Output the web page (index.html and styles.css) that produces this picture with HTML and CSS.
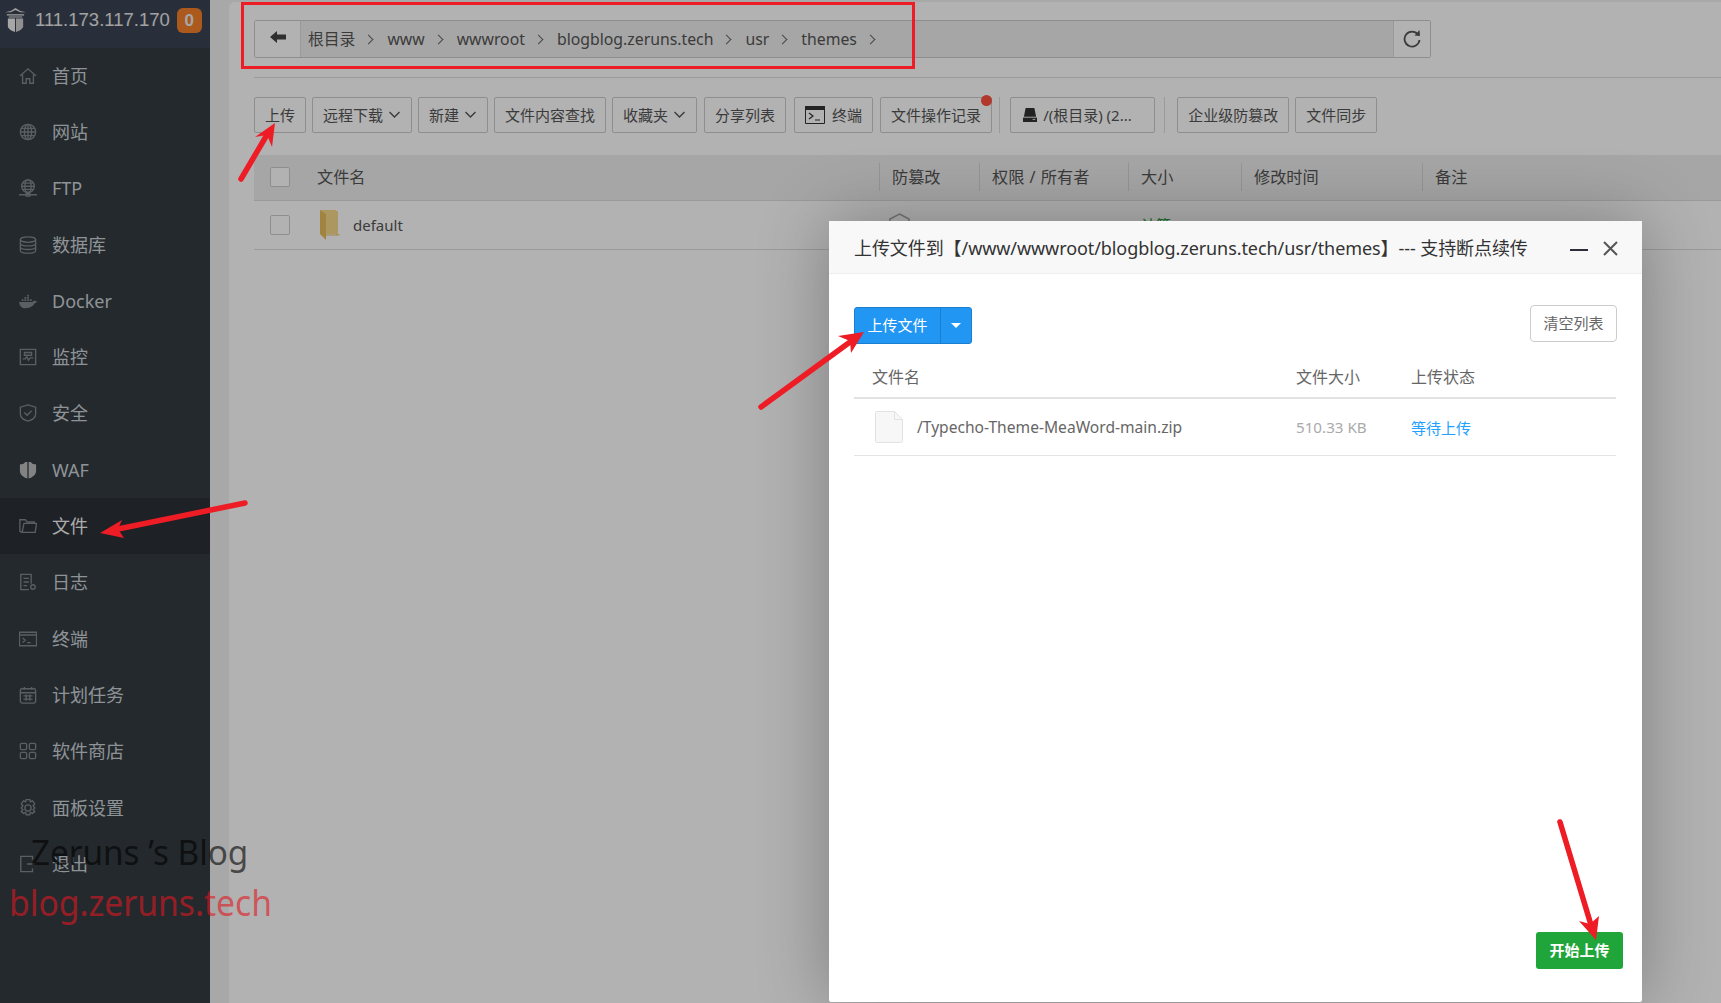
FILE: index.html
```html
<!doctype html>
<html lang="zh-CN">
<head>
	<title>文件管理</title>
	<meta charset="UTF-8">
	<link rel="stylesheet" href="styles.css">
</head>
<body>

<div class="app">

	<!-- sidebar -->
	<div class="side">
		<div class="side-head">
			<svg class="logo" viewBox="0 0 22 25"><path d="M6 3 L11 0 L16 3 L22 4.500 L16 4.500 L11 2 L6 4.500 L0 4.500Z" fill="#e6e6e6"/><path d="M2 6.500h18v1.200H2zM4 8.800h14v1H4z" fill="#e6e6e6"/><path d="M3 11h7.500v14C7 24 3 21.500 3 19z" fill="#f0f0f0"/><path d="M11.500 11H19v8c0 2.500-4 5-7.500 6z" fill="#cfcfcf"/></svg>
			<span class="ip">111.173.117.170</span>
			<span class="badge">0</span>
		</div>
		<ul class="menu">
			<li><svg viewBox="0 0 20 20"><path d="M1 10 L10 2 L19 10 M4 8.500V18h4v-5h4v5h4V8.500"/></svg><span>首页</span></li>
			<li><svg viewBox="0 0 20 20"><circle cx="10" cy="10" r="8.500"/><ellipse cx="10" cy="10" rx="4" ry="8.500"/><path d="M1.500 10h17M2.500 6h15M2.500 14h15M10 1.500v17"/></svg><span>网站</span></li>
			<li><svg viewBox="0 0 20 20"><circle cx="10" cy="8" r="7"/><ellipse cx="10" cy="8" rx="3.500" ry="7"/><path d="M3 8h14M4 4.500h12M4 11.500h12M0 17.500h20"/><path d="M8 16h4v3H8z"/></svg><span>FTP</span></li>
			<li><svg viewBox="0 0 20 20"><ellipse cx="10" cy="4" rx="8.500" ry="3"/><path d="M1.500 4v12c0 1.700 3.800 3 8.500 3s8.500-1.300 8.500-3V4M1.500 8c0 1.700 3.800 3 8.500 3s8.500-1.300 8.500-3M1.500 12c0 1.700 3.800 3 8.500 3s8.500-1.300 8.500-3"/></svg><span>数据库</span></li>
			<li><svg class="solid" viewBox="0 0 20 20"><path d="M0 11h15c.5-1 2-1.500 3.500-1 .5.200 1 .5 1.500.8-.5 1-1.500 1.500-2.500 1.500C16 16 12 18 7 18c-4 0-6-2-7-7z"/><path d="M3 8h2v2H3zM6 8h2v2H6zM9 8h2v2H9zM6 5.500h2v2H6zM9 5.500h2v2H9zM9 3h2v2H9zM12 8h2v2h-2z"/></svg><span>Docker</span></li>
			<li><svg viewBox="0 0 20 20"><path d="M1.500 1.500h17v17h-17z"/><path d="M4 12h3l1.500-2.500 2 4 2-2.500H16M6 5h8v3H6z"/></svg><span>监控</span></li>
			<li><svg viewBox="0 0 20 20"><path d="M10 1 L18.500 3.500V11c0 3.500-3.500 6.500-8.500 8-5-1.500-8.500-4.500-8.500-8V3.500z"/><path d="M6 9.500l3 3 5-5"/></svg><span>安全</span></li>
			<li><svg class="solid bright" viewBox="0 0 20 20"><path d="M9.300 1V19.500C5 18 1 15 1 11V4L5 3 7 1zM10.700 1V19.500c4.300-1.500 8.300-4.500 8.300-8.500V4L15 3l-2-2z"/></svg><span>WAF</span></li>
			<li class="on"><svg viewBox="0 0 20 20"><path d="M3.500 17H18l1.500-10H5.500z"/><path d="M3.500 17 1 16V3h6l2 2.500h8V7"/></svg><span>文件</span></li>
			<li><svg viewBox="0 0 20 20"><path d="M13.500 12V1.500H2v17h9M5 6h6M5 10h6M5 14h4"/><circle cx="15.500" cy="15.500" r="2.500"/></svg><span>日志</span></li>
			<li><svg viewBox="0 0 20 20"><path d="M.5 2.500h19v15H.5zM.5 5.500h19M4 9l3 2.500L4 14M9 14h4"/></svg><span>终端</span></li>
			<li><svg viewBox="0 0 20 20"><rect x="1.500" y="3" width="17" height="16" rx="2"/><path d="M1.500 7.500h17M6 1v3M14 1v3M5 11h10M5 14.500h10M8 9.500v7M12 9.500v7"/></svg><span>计划任务</span></li>
			<li><svg viewBox="0 0 20 20"><rect x="1.500" y="1.500" width="7" height="7" rx="1.500"/><rect x="11.500" y="1.500" width="7" height="7" rx="1.500"/><rect x="1.500" y="11.500" width="7" height="7" rx="1.500"/><rect x="11.500" y="11.500" width="7" height="7" rx="1.500"/></svg><span>软件商店</span></li>
			<li><svg viewBox="0 0 20 20"><path d="M8 .5h4l.6 2.500 2.400-1 2.500 3.500-1.800 2 1.800 2.500-1.800 2 1.800 2-2.500 2-2.400-1-.6 2.500H8l-.6-2.500-2.400 1-2.500-2 1.800-2-1.800-2 1.800-2.500-1.800-2L5 2l2.400 1z"/><circle cx="10" cy="10" r="3.500"/></svg><span>面板设置</span></li>
			<li><svg viewBox="0 0 20 20"><path d="M15 5V1.500H2v17h13V15M9 10h9"/></svg><span>退出</span></li>
		</ul>
	</div>

	<!-- main content -->
	<div class="main">
		<div class="card">

			<div class="pathbar">
				<div class="path-back"><svg viewBox="0 0 16 12"><path d="M0 6 L7 0 V3.500 H16 V8.500 H7 V12Z"/></svg></div>
				<div class="crumbs">
					<span>根目录</span><i></i>
					<span>www</span><i></i>
					<span>wwwroot</span><i></i>
					<span>blogblog.zeruns.tech</span><i></i>
					<span>usr</span><i></i>
					<span>themes</span><i></i>
				</div>
				<div class="path-reload"><svg viewBox="0 0 18 20"><path d="M15 5.500A7.500 7.500 0 1 0 16.500 11"/><path class="fill" d="M11.500 6.500 L17 7 L16.500 1Z"/></svg></div>
			</div>

			<div class="toolbar">
				<a class="btn btn-s">上传</a>
				<a class="btn btn-s">远程下载<svg class="down" viewBox="0 0 12 8"><path d="M1 1l5 5 5-5"/></svg></a>
				<a class="btn btn-s">新建<svg class="down" viewBox="0 0 12 8"><path d="M1 1l5 5 5-5"/></svg></a>
				<a class="btn btn-s">文件内容查找</a>
				<a class="btn btn-m">收藏夹<svg class="down" viewBox="0 0 12 8"><path d="M1 1l5 5 5-5"/></svg></a>
				<a class="btn btn-g">分享列表</a>
				<a class="btn btn-m"><svg class="term" viewBox="0 0 20 18"><path d="M.5 .5h19v17H.5z" fill="#fff" stroke="#333"/><path d="M0 0h20v4H0z" fill="#333"/><path d="M4 7l4 3-4 3M10 14h5" fill="none" stroke="#333" stroke-width="1.200"/></svg>终端</a>
				<a class="btn btn-m">文件操作记录<b class="dot"></b></a>
				<em class="sep"></em>
				<a class="btn btn-disk"><svg class="disk" viewBox="0 0 16 16"><path d="M3 0h10l2 10H1z" fill="#333"/><path d="M0 11h16v5H0z" fill="#333"/><path d="M11 13h3" stroke="#fff"/></svg>/(根目录) (2...</a>
				<em class="sep sep-w"></em>
				<a class="btn btn-s">企业级防篡改</a>
				<a class="btn btn-s">文件同步</a>
			</div>

			<div class="thead">
				<div class="c-name"><span class="check"></span><span class="fname">文件名</span></div>
				<div class="c-tamper">防篡改</div>
				<div class="c-perm">权限 / 所有者</div>
				<div class="c-size">大小</div>
				<div class="c-time">修改时间</div>
				<div class="c-note">备注</div>
			</div>
			<div class="trow">
				<div class="c-name"><span class="check"></span>
					<svg class="folder" viewBox="0 0 20 30"><path d="M0 0h16v1h2v24h-2v-1H5L0 0z" fill="#f7d98a"/><path d="M0 0l6 4v26L0 24z" fill="#e8bd5e"/><path d="M6 24.500H20l-1 1H6z" fill="#e8bd5e"/></svg>
					<span class="dname">default</span></div>
				<div class="c-tamper"><svg class="shield" viewBox="0 0 21 24"><path d="M10.500 1 L20 6V18L10.500 23 L1 18V6z" fill="none" stroke="#aaa" stroke-width="1.500"/></svg></div>
				<div class="c-perm">755 / www</div>
				<div class="c-size green">计算</div>
				<div class="c-time">2023/06/06 14:07:38</div>
				<div class="c-note"></div>
			</div>
		</div>
	</div>
</div>

<div class="shade"></div>

<!-- upload dialog -->
<div class="modal">
	<div class="modal-head">
		<span>上传文件到【/www/wwwroot/blogblog.zeruns.tech/usr/themes】--- 支持断点续传</span>
		<em class="min"></em>
		<svg class="close" viewBox="0 0 15 15"><path d="M1 1l13 13M14 1L1 14"/></svg>
	</div>
	<div class="modal-body">
		<div class="up-bar">
			<div class="up-btn"><span class="up-main">上传文件</span><span class="up-arrow"><b></b></span></div>
			<a class="clear-btn">清空列表</a>
		</div>
		<div class="up-head">
			<span class="u-name">文件名</span>
			<span class="u-size">文件大小</span>
			<span class="u-state">上传状态</span>
		</div>
		<div class="up-row">
			<svg class="fileicon" viewBox="0 0 28 32"><path d="M1.500 .5h18l8 8v21a2 2 0 0 1-2 2h-24a1 1 0 0 1-1-1v-29a1 1 0 0 1 1-1z" fill="#f7f7f7" stroke="#e2e2e2"/><path d="M19.500 .5v8h8" fill="none" stroke="#e2e2e2"/></svg>
			<span class="u-name">/Typecho-Theme-MeaWord-main.zip</span>
			<span class="u-size gray">510.33 KB</span>
			<span class="u-state blue">等待上传</span>
		</div>
		<div class="up-foot"><a class="start-btn">开始上传</a></div>
	</div>
</div>

<!-- annotations pasted over the screenshot -->
<div class="mark-box"></div>
<svg class="marks" viewBox="0 0 1721 1003">
	<g>
		<path d="M245 503 L118 529"/><polygon points="100,533 122,520 118,529 124,538"/>
		<path d="M241 179 L268 133"/><polygon points="275,123 272,147 267,135 255,137"/>
		<path d="M761 407 L850 342"/><polygon points="864,332 851,353 850,341 838,336"/>
		<path d="M1560 822 L1591 925"/><polygon points="1596,940 1579,921 1590,924 1599,916"/>
	</g>
</svg>
<div class="wm wm-dark">Zeruns ’s Blog</div>
<div class="wm wm-red">blog.zeruns.tech</div>

</body>
</html>
```

FILE: styles.css
```css
html, body { margin: 0; padding: 0; height: 100%; overflow: hidden; }
body { font-family: "Noto Sans", "Noto Sans CJK SC", sans-serif; font-size: 15px; color: #555; background: #f1f1f1; }
ul { list-style: none; margin: 0; padding: 0; }
a, em, i { display: block; font-style: normal; }

.app { display: flex; height: 1003px; }

/* sidebar */
.side { width: 210px; flex: none; background: #343b41; }
.side-head { height: 48px; display: flex; align-items: center; padding-left: 5px; background: #3c4453; box-sizing: border-box; padding-bottom: 8px; }
.logo { width: 21px; height: 24px; flex: none; }
.ip { margin-left: 9px; font-family: "Liberation Sans", sans-serif; font-size: 18.500px; color: #e8e8e8; }
.badge { margin-left: 7px; width: 25px; height: 25px; line-height: 25px; text-align: center; border-radius: 6px; background: #f58029; color: #eee; font-family: "Liberation Sans", sans-serif; font-weight: bold; font-size: 17px; }
.menu { margin-top: -.5px; }
.menu li { height: 56.3px; display: flex; align-items: center; padding-left: 19px; color: #ccd3d8; font-size: 18px; line-height: 24px; }
.menu svg { width: 18px; height: 18px; flex: none; margin-right: 15px; fill: none; stroke: #81888e; stroke-width: 1.500; }
.menu svg.solid { fill: #81888e; stroke: none; }
.menu svg.bright { fill: #bcbcbc; }
.menu .on { background: #2c3036; color: #f5f5f5; }

/* content */
.main { flex: 1; min-width: 0; padding: 2px 0 0 19px; }
.card { height: 100%; background: #fff; border-radius: 6px 0 0 0; padding: 18px 0 0 25px; }

.pathbar { display: flex; width: 1177px; height: 38px; box-sizing: border-box; border: 1px solid #ccc; border-radius: 2px; background: #eee; }
.path-back { width: 45px; flex: none; display: flex; align-items: center; justify-content: center; background: #fff; border-right: 1px solid #ddd; }
.path-back svg { width: 16px; height: 12px; fill: #444; margin-top: -4px; }
.crumbs { flex: 1; display: flex; align-items: center; padding-left: 7px; font-size: 15.800px; line-height: 36px; }
.crumbs i { width: 6px; height: 6px; border: solid #666; border-width: 1.500px 1.500px 0 0; transform: rotate(45deg); margin: 0 15px 0 10px; }
.path-reload { width: 36px; flex: none; display: flex; align-items: center; justify-content: center; background: #fff; border-left: 1px solid #ddd; }
.path-reload svg { width: 18px; height: 20px; fill: none; stroke: #555; stroke-width: 1.800; }
.path-reload .fill { fill: #555; stroke: none; }

.toolbar { display: flex; align-items: flex-start; margin-top: 19px; padding-top: 19px; border-top: 1px solid #ddd; }
.btn { position: relative; height: 36px; line-height: 34px; box-sizing: border-box; padding: 0 10px; border: 1px solid #ccc; border-radius: 2px; display: flex; align-items: center; white-space: nowrap; margin-right: 7px; background: #fff; }
.btn-s { margin-right: 6px; }
.btn-g { margin-right: 8px; }
.down { width: 13px; height: 8px; margin-left: 5px; fill: none; stroke: #555; stroke-width: 1.400; }
.term { width: 20px; height: 18px; margin-right: 7px; }
.disk { width: 14px; height: 14px; margin: 0 6px 0 2px; }
.btn-disk { width: 145px; }
.dot { position: absolute; top: -3px; right: -1px; width: 11px; height: 11px; border-radius: 50%; background: #ff5040; }
.sep { width: 1px; height: 36px; background: #ddd; margin-right: 10px; }
.sep-w { margin-right: 12px; margin-left: 2px; }

.thead, .trow { display: flex; align-items: center; border-bottom: 1px solid #ddd; }
.thead { margin-top: 22px; background: #eee; font-size: 16.200px; line-height: 28px; box-sizing: border-box; padding-bottom: 2px; height: 46px; }
.thead > div + div { border-left: 1px solid #d6d6d6; padding-left: 12px; }
.trow { height: 49px; line-height: 28px; color: #555; box-sizing: border-box; padding-bottom: 1px; }
.trow > div + div { padding-left: 13px; }
.trow .c-tamper { padding-left: 10px; display: flex; }
.c-name { width: 625px; flex: none; display: flex; align-items: center; box-sizing: border-box; padding-left: 16px; }
.c-tamper { width: 100px; flex: none; box-sizing: border-box; }
.c-perm { width: 149px; flex: none; box-sizing: border-box; word-spacing: 1px; }
.c-size { width: 113px; flex: none; box-sizing: border-box; }
.c-time { width: 181px; flex: none; box-sizing: border-box; white-space: nowrap; }
.check { width: 20px; height: 20px; box-sizing: border-box; border: 1px solid #ccc; border-radius: 2px; background: #fff; }
.fname { margin-left: 27px; }
.folder { width: 20px; height: 30px; margin-left: 30px; }
.dname { margin-left: 13px; }
.shield { width: 21px; height: 26px; }
.green { color: #20a53a; }

/* dim layer, dialog */
.shade { position: absolute; left: 0; top: 0; width: 100%; height: 100%; background: rgba(0, 0, 0, .3); }
.modal { position: absolute; left: 829px; top: 221px; width: 813px; height: 781px; background: #fff; box-shadow: 0 0 70px rgba(0, 0, 0, .3); border-radius: 2px; display: flex; flex-direction: column; }
.modal-head { height: 53px; flex: none; box-sizing: border-box; display: flex; align-items: center; padding: 0 24px 0 25px; background: #f8f8f8; border-bottom: 1px solid #eee; font-size: 18px; color: #333; white-space: nowrap; letter-spacing: -.08px; }
.modal-head span { flex: 1; }
.min { width: 18px; height: 2px; background: #2e2d3c; margin-top: 6px; }
.close { width: 15px; height: 15px; margin-left: 15px; fill: none; stroke: #555; stroke-width: 2; margin-top: 2px; }
.modal-body { flex: 1; position: relative; padding: 0 25px; }
.up-bar { display: flex; justify-content: space-between; align-items: flex-start; padding-top: 31px; height: 73px; box-sizing: border-box; }
.up-btn { display: flex; height: 37px; margin-top: 2px; color: #fff; background: #2196f3; border: 1px solid #1a7fd0; border-radius: 3px; box-sizing: border-box; line-height: 35px; }
.up-main { width: 85px; text-align: center; border-right: 1px solid #1a7fd0; }
.up-arrow { width: 30px; display: flex; align-items: center; justify-content: center; }
.up-arrow b { border: 5px solid transparent; border-top-color: #fff; border-bottom: 0; }
.clear-btn { height: 37px; width: 87px; box-sizing: border-box; border: 1px solid #ccc; border-radius: 4px; text-align: center; line-height: 35px; color: #666; }
.up-head, .up-row { display: flex; align-items: center; width: 762px; border-bottom: 1px solid #e4e4e4; }
.up-head { height: 52px; font-size: 16px; color: #666; border-bottom-width: 2px; border-color: #e2e2e2; box-sizing: border-box; padding-top: 8px; }
.up-row { height: 56px; }
.up-head .u-name { width: 424px; margin-left: 18px; }
.up-head .u-size { width: 115px; }
.up-row .fileicon { width: 28px; height: 32px; flex: none; margin-left: 21px; }
.up-row .u-name { width: 379px; margin-left: 14px; white-space: nowrap; color: #666; font-size: 15.600px; }
.up-row .u-size { width: 115px; font-size: 15.200px; }
.gray { color: #aaa; }
.blue { color: #20a0ff; }
.up-foot { position: absolute; right: 19px; bottom: 33px; }
.start-btn { width: 87px; height: 37px; line-height: 37px; text-align: center; background: #20a53a; color: #fff; font-weight: bold; border-radius: 3px; }

/* annotations */
.mark-box { position: absolute; left: 241px; top: 2px; width: 674px; height: 67px; box-sizing: border-box; border: 3px solid #ee1c25; }
.marks { position: absolute; left: 0; top: 0; width: 1721px; height: 1003px; }
.marks path { fill: none; stroke: #ee1c25; stroke-width: 5.500; stroke-linecap: round; }
.marks polygon { fill: #ee1c25; }
.wm { position: absolute; white-space: nowrap; font-family: "Noto Sans", sans-serif; line-height: 50px; transform-origin: left center; }
.wm-dark { left: 31px; top: 827px; font-size: 35px; color: rgba(0, 0, 0, .6); transform: scaleX(.95); }
.wm-red { left: 9px; top: 878px; font-size: 36px; color: rgba(224, 24, 34, .62); transform: scaleX(.935); }
```
